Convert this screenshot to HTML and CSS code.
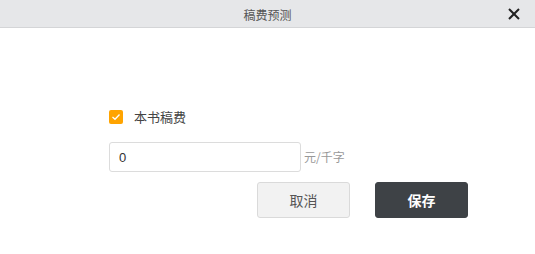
FILE: index.html
```html
<!DOCTYPE html>
<html lang="zh-CN">
<head>
    <meta charset="UTF-8">
    <meta name="viewport" content="width=device-width, initial-scale=1.0">
    <title>稿费预测</title>
    <link rel="stylesheet" href="styles.css">
</head>
<body>
    <div class="dialog">
        <div class="dialog-header">
            <span class="dialog-title">稿费预测</span>
            <button class="close-btn" aria-label="关闭">
                <svg width="12" height="12" viewBox="0 0 12 12">
                    <path d="M1 1 L11 11 M11 1 L1 11" stroke="#222" stroke-width="2" fill="none"/>
                </svg>
            </button>
        </div>
        <div class="dialog-body">
            <label class="check-row">
                <span class="checkbox">
                    <svg width="10" height="8" viewBox="0 0 10 8">
                        <path d="M1.5 4 L4 6.3 L8.5 1.5" stroke="#fff" stroke-width="1.3" fill="none"/>
                    </svg>
                </span>
                <span class="check-label">本书稿费</span>
            </label>
            <div class="input-row">
                <input type="text" class="fee-input" value="0">
                <span class="unit">元/千字</span>
            </div>
            <div class="actions">
                <button class="btn btn-cancel">取消</button>
                <button class="btn btn-save">保存</button>
            </div>
        </div>
    </div>
</body>
</html>
```

FILE: styles.css
```css
body {
    margin: 0;
    padding: 0;
    background-color: #fff;
    font-family: "Noto Sans CJK SC", "Liberation Sans", sans-serif;
    color: #333;
}
.dialog {
    width: 535px;
    height: 254px;
    background-color: #fff;
}
.dialog-header {
    position: relative;
    height: 27px;
    line-height: 27px;
    background-color: #e6e7e9;
    border-bottom: 1px solid #d4d5d7;
    text-align: center;
}
.dialog-title {
    font-size: 12px;
    color: #555;
}
.close-btn {
    position: absolute;
    right: 15px;
    top: 8px;
    width: 12px;
    height: 12px;
    padding: 0;
    border: none;
    background: none;
    cursor: pointer;
}
.close-btn svg {
    display: block;
}
.dialog-body {
    padding: 82px 0 0 109px;
}
.check-row {
    display: flex;
    align-items: center;
    height: 14px;
}
.checkbox {
    display: flex;
    align-items: center;
    justify-content: center;
    width: 14px;
    height: 14px;
    border-radius: 2px;
    background-color: #ffa400;
}
.check-label {
    margin-left: 11px;
    margin-top: -2px;
    font-size: 13px;
    color: #444;
}
.input-row {
    display: flex;
    align-items: flex-end;
    margin-top: 18px;
}
.fee-input {
    width: 192px;
    height: 30px;
    box-sizing: border-box;
    padding: 0 9px;
    border: 1px solid #dcdcdc;
    border-radius: 3px;
    font-family: "Liberation Sans", sans-serif;
    font-size: 13px;
    color: #333;
    outline: none;
}
.unit {
    margin-left: 3px;
    margin-bottom: 7px;
    font-size: 12px;
    color: #999;
}
.actions {
    display: flex;
    gap: 25px;
    margin-top: 10px;
    padding-left: 148px;
}
.btn {
    width: 93px;
    height: 36px;
    border-radius: 3px;
    font-family: "Noto Sans CJK SC", sans-serif;
    font-size: 14px;
    cursor: pointer;
}
.btn-cancel {
    background-color: #f2f2f2;
    border: 1px solid #dadada;
    color: #555;
}
.btn-save {
    background-color: #3e4246;
    border: 1px solid #3e4246;
    color: #fff;
    font-weight: bold;
}
```
